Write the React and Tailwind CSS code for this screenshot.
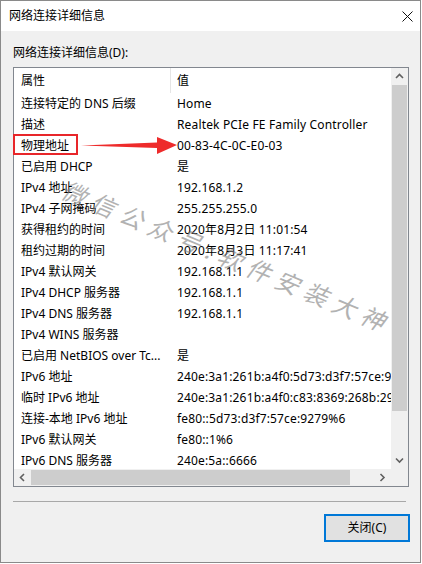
import React from "react";

const rows = [
  ["连接特定的 DNS 后缀", "Home"],
  ["描述", "Realtek PCIe FE Family Controller"],
  ["物理地址", "00-83-4C-0C-E0-03"],
  ["已启用 DHCP", "是"],
  ["IPv4 地址", "192.168.1.2"],
  ["IPv4 子网掩码", "255.255.255.0"],
  ["获得租约的时间", "2020年8月2日 11:01:54"],
  ["租约过期的时间", "2020年8月3日 11:17:41"],
  ["IPv4 默认网关", "192.168.1.1"],
  ["IPv4 DHCP 服务器", "192.168.1.1"],
  ["IPv4 DNS 服务器", "192.168.1.1"],
  ["IPv4 WINS 服务器", ""],
  ["已启用 NetBIOS over Tc...", "是"],
  ["IPv6 地址", "240e:3a1:261b:a4f0:5d73:d3f7:57ce:9279"],
  ["临时 IPv6 地址", "240e:3a1:261b:a4f0:c83:8369:268b:29c5"],
  ["连接-本地 IPv6 地址", "fe80::5d73:d3f7:57ce:9279%6"],
  ["IPv6 默认网关", "fe80::1%6"],
  ["IPv6 DNS 服务器", "240e:5a::6666"],
];

const font = { fontFamily: '"Noto Sans", "Noto Sans CJK SC", sans-serif' };

function Chevron({ dir }) {
  const pts = {
    up: "1,5 4.5,1.5 8,5",
    down: "1,1.5 4.5,5 8,1.5",
    left: "5,1 1.5,4.5 5,8",
    right: "1.5,1 5,4.5 1.5,8",
  }[dir];
  const w = dir === "up" || dir === "down" ? 9 : 7;
  const h = dir === "up" || dir === "down" ? 7 : 9;
  return (
    <svg width={w} height={h} viewBox={`0 0 ${w} ${h}`}>
      <polyline points={pts} fill="none" stroke="#606060" strokeWidth="1.6" />
    </svg>
  );
}

export default function App() {
  return (
    <div className="w-[422px] h-[564px] bg-white text-black" style={font}>
      <div className="relative w-[421px] h-[563px] border border-[#8a8a8a] bg-[#f0f0f0] flex flex-col overflow-hidden">
        {/* Title bar */}
        <div className="h-[30px] bg-white flex items-center justify-between pl-[8px] pr-[7px] shrink-0">
          <span className="text-[12px] leading-[16px]">网络连接详细信息</span>
          <svg width="11" height="11" viewBox="0 0 11 11">
            <line x1="0.5" y1="0.5" x2="10.5" y2="10.5" stroke="#111" strokeWidth="1" />
            <line x1="10.5" y1="0.5" x2="0.5" y2="10.5" stroke="#111" strokeWidth="1" />
          </svg>
        </div>

        {/* Body */}
        <div className="flex flex-col pt-[14px]">
          <div className="pl-[12px] text-[12px] leading-[16px]">网络连接详细信息(D):</div>

          <div className="relative ml-[12px] mt-[6px] w-[396px] h-[420px] border border-[#82878f] bg-white grid grid-cols-[377px_17px] grid-rows-[401px_17px]">
            {/* content */}
            <div className="overflow-hidden text-[12px]">
              <div className="flex h-[25px] items-center">
                <div className="w-[156px] pl-[7px]">属性</div>
                <div className="w-px h-[25px] bg-[#e5e5e5]" />
                <div className="pl-[6px]">值</div>
              </div>
              {rows.map(([k, v], i) => (
                <div key={i} className="flex h-[21px] items-center whitespace-nowrap">
                  <div className="w-[156px] shrink-0 pl-[7px] overflow-hidden">{k}</div>
                  <div className="shrink-0 pl-[7px] tracking-[0.15px]">{v}</div>
                </div>
              ))}
            </div>

            {/* vertical scrollbar */}
            <div className="bg-[#f0f0f0] flex flex-col">
              <div className="h-[17px] flex items-center justify-center">
                <Chevron dir="up" />
              </div>
              <div className="h-[326px] mx-[1px] bg-[#cdcdcd]" />
              <div className="flex-1" />
              <div className="h-[17px] flex items-center justify-center">
                <Chevron dir="down" />
              </div>
            </div>

            {/* horizontal scrollbar */}
            <div className="bg-[#f0f0f0] flex">
              <div className="w-[17px] flex items-center justify-center">
                <Chevron dir="left" />
              </div>
              <div className="w-[319px] my-[1px] bg-[#cdcdcd]" />
              <div className="flex-1" />
              <div className="w-[17px] flex items-center justify-center">
                <Chevron dir="right" />
              </div>
            </div>
            <div className="bg-[#f0f0f0]" />

            {/* red highlight box */}
            <div className="absolute left-[-1px] top-[66px] w-[65px] h-[21px] border-2 border-[#e8262a]" />
          </div>

          <div className="ml-[12px] mt-[14px] w-[393px] h-px bg-[#a8a8a8]" />

          <div className="self-end mr-[10px] mt-[12px] w-[86px] h-[28px] border-2 border-[#0078d7] bg-[#e1e1e1] flex items-center justify-center text-[12px]">
            关闭(C)
          </div>
        </div>

        {/* arrow overlay */}
        <svg className="absolute left-0 top-0 pointer-events-none" width="421" height="563" viewBox="0 0 421 563">
          <polygon points="80,144.5 156,141.5 156,136 176,144 156,153 156,147" fill="#ee2b2b" />
        </svg>

        {/* watermark */}
        <div
          className="absolute left-[68px] top-[174px] pointer-events-none whitespace-nowrap text-[24px] leading-[28px] tracking-[7px] text-[#808080] opacity-60 italic"
          style={{ transform: "rotate(22.7deg)", transformOrigin: "0 0", fontFamily: '"Noto Sans CJK SC", sans-serif' }}
        >
          微信公众号:软件安装大神
        </div>
      </div>
    </div>
  );
}
